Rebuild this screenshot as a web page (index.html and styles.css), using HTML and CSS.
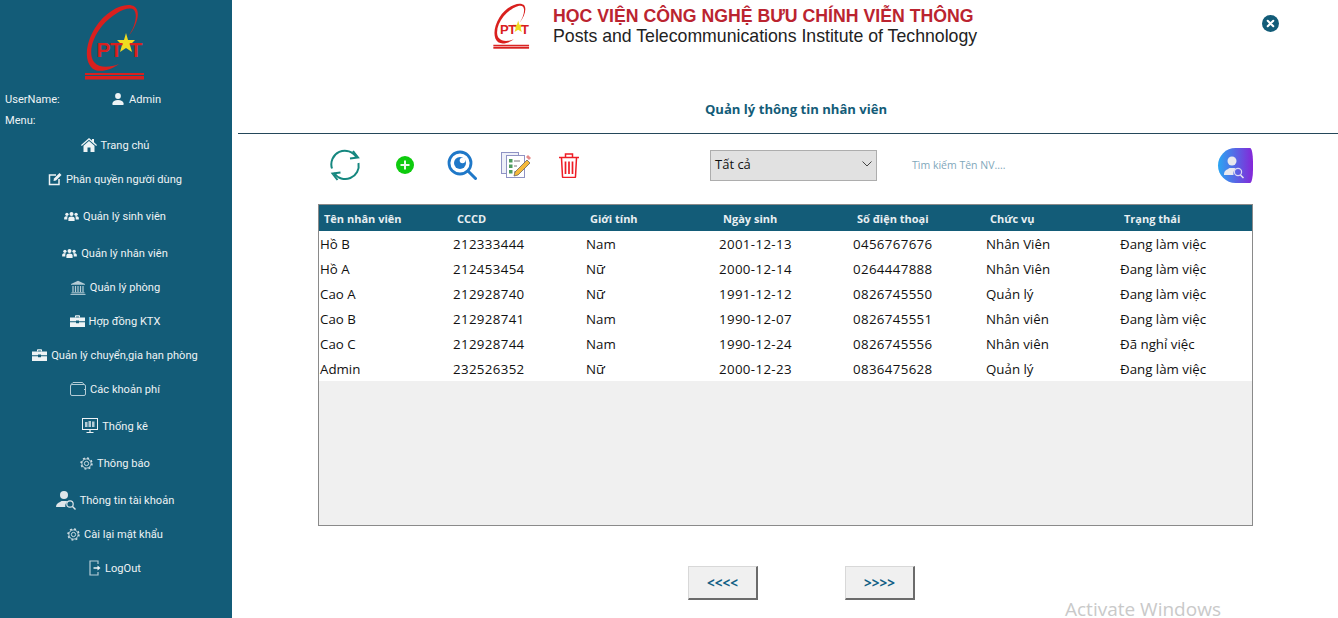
FILE: index.html
```html
<!DOCTYPE html>
<html lang="vi">
<head>
<meta charset="utf-8">
<title>Quản lý thông tin nhân viên</title>
<link rel="stylesheet" href="styles.css">
</head>
<body>
<svg class="defs" width="0" height="0" aria-hidden="true">
  <symbol id="i-users" viewBox="0 0 16 12"><circle cx="8" cy="3.2" r="2.2"/><path d="M4.6 11V8.2C4.6 6.8 5.8 6 8 6s3.4.8 3.4 2.200V11z"/><circle cx="3" cy="3.600" r="1.800"/><path d="M0 9.400V7.600C0 6.400 1 5.800 3 5.800c.4 0 .7 0 1 .1-.6.500-.6 1.300-.6 2.300v1.200z"/><circle cx="13" cy="3.600" r="1.800"/><path d="M16 9.400V7.600C16 6.400 15 5.800 13 5.800c-.4 0-.7 0-1 .1.600.500.600 1.300.600 2.300v1.200z"/></symbol>
  <symbol id="i-case" viewBox="0 0 15 12"><path d="M5 2.500V1.200C5 .6 5.400.2 6 .2h3c.6 0 1 .4 1 1v1.300H8.900V1.400H6.100v1.100z"/><path d="M0 2.500h15v3.700H9v-.8H6v.8H0z"/><path d="M0 7.200h6v1h3v-1h6V12H0z"/></symbol>
  <symbol id="i-gear" viewBox="0 0 14 14"><circle cx="7" cy="7" r="5" fill="none" stroke="currentColor" stroke-width="1"/><circle cx="7" cy="7" r="2.300" fill="none" stroke="currentColor" stroke-width="1"/><circle cx="7" cy="7" r="5.900" fill="none" stroke="currentColor" stroke-width="1.600" stroke-dasharray="2.100 2.530"/></symbol>
  <symbol id="i-ring" viewBox="0 0 60 76">
    <path d="M43 33C52 22 56 8 50 3 42-3 22 5 10 24 0 40-1 58 8 65c7 4 18 1 26-5-10 4-20 4-25-2C3 50 7 34 17 22 28 9 44 1 49 6 53 11 50 23 43 33z" fill="#d9201e"/>
    <polygon points="41,29 43,36 50,36 45,41 47,48 41,44 35,48 37,41 32,36 39,36" fill="#f0dc20"/>
    <rect x="0" y="69" width="59" height="2" fill="#d9201e"/>
    <rect x="0" y="72" width="59" height="3.500" fill="#d9201e"/>
  </symbol>
</svg>

<div class="app">
  <aside class="sidebar">
    <div class="side-logo"><div class="logo-mark"><svg width="60" height="76"><use href="#i-ring"/></svg><span class="logo-pt">PT</span><span class="logo-t">T</span></div></div>
    <div class="user-row">
      <span class="user-label">UserName:</span>
      <span class="user-name">
        <svg width="12" height="12" viewBox="0 0 12 12" fill="currentColor"><circle cx="6" cy="3" r="2.900"/><path d="M.5 12v-1.800C.5 8.300 2.800 7 6 7s5.500 1.300 5.500 3.200V12z"/></svg>
        Admin
      </span>
    </div>
    <div class="menu-label">Menu:</div>
    <nav class="nav">
      <a class="nav-item"><svg width="16" height="14" viewBox="0 0 16 14" fill="currentColor"><path d="M8 0l3 2.600V1h2v3.300L16 7l-.8.9L8 1.700.8 7.900 0 7z"/><path d="M8 3L2.500 7.700V14H6.500V9.500h3V14h4V7.700z"/></svg>Trang chủ</a>
      <a class="nav-item"><svg width="14" height="14" viewBox="0 0 14 14" fill="none" stroke="currentColor"><path d="M8 3H1.500v9.500H11V7" stroke-width="1.500"/><path d="M6 6.500L11.500 1 13.500 3 8 8.500 5.500 9z" fill="currentColor" stroke="none"/></svg>Phân quyền người dùng</a>
      <a class="nav-item tall"><svg width="15" height="11" fill="currentColor"><use href="#i-users"/></svg>Quản lý sinh viên</a>
      <a class="nav-item tall"><svg width="15" height="11" fill="currentColor"><use href="#i-users"/></svg>Quản lý nhân viên</a>
      <a class="nav-item"><svg width="16" height="15" viewBox="0 0 16 15" fill="none" stroke="#b5ccd6"><path d="M8 .8L15 4v.8H1V4z" fill="#b5ccd6" stroke="none"/><path d="M3 6v6M5.500 6v6M8 6v6M10.500 6v6M13 6v6" stroke-width="1.200"/><path d="M1.500 12.800h13M.5 14.400h15"/></svg>Quản lý phòng</a>
      <a class="nav-item"><svg width="15" height="12" fill="currentColor"><use href="#i-case"/></svg>Hợp đồng KTX</a>
      <a class="nav-item"><svg width="15" height="12" fill="currentColor"><use href="#i-case"/></svg>Quản lý chuyển,gia hạn phòng</a>
      <a class="nav-item"><svg width="16" height="14" viewBox="0 0 16 14" fill="none" stroke="#b5ccd6"><rect x=".5" y="2.500" width="15" height="11" rx="1.500"/><path d="M1 2.500L3 .5h9.500l1.500 2"/><path d="M15 7.500h-1"/></svg>Các khoản phí</a>
      <a class="nav-item tall"><svg width="16" height="16" viewBox="0 0 16 16" fill="none" stroke="currentColor"><rect x=".5" y=".5" width="15" height="11"/><rect x="3" y="4" width="2.500" height="5" fill="#b5ccd6" stroke="none"/><rect x="6.500" y="3" width="2.500" height="6" fill="#b5ccd6" stroke="none"/><rect x="10" y="3.500" width="2.500" height="5.500" fill="#b5ccd6" stroke="none"/><path d="M8 12v2M4.500 14.500h7" stroke-width="1.200"/></svg>Thống kê</a>
      <a class="nav-item tall"><svg width="13" height="13" class="gear"><use href="#i-gear"/></svg>Thông báo</a>
      <a class="nav-item tall"><svg class="acct" width="20" height="20" viewBox="0 0 20 20" fill="#dfe6ea"><circle cx="8" cy="5" r="4"/><path d="M0 17c0-3 2-4 4-5l1.500-1h5l1 1c-1.800 1-2.500 2.500-2.200 5z"/><circle cx="14" cy="14" r="3.200" fill="none" stroke="#dfe6ea" stroke-width="1.200"/><path d="M16.500 16.500l3 3" stroke="#dfe6ea" stroke-width="1.400"/></svg>Thông tin tài khoản</a>
      <a class="nav-item"><svg width="13" height="13" class="gear"><use href="#i-gear"/></svg>Cài lại mật khẩu</a>
      <a class="nav-item"><svg width="12" height="16" viewBox="0 0 12 16" fill="none" stroke="#b5ccd6" stroke-width="1.200"><path d="M9 4V1H1v14h8v-3"/><path d="M4.500 8H10" stroke="#eef3f5" stroke-width="1.500"/><path d="M8.500 5.500L11.500 8l-3 2.500z" fill="#eef3f5" stroke="none"/></svg>LogOut</a>
    </nav>
  </aside>

  <main class="main">
    <header class="topbar">
      <div class="brand">
        <div class="logo-mark small"><svg width="37" height="46"><use href="#i-ring"/></svg><span class="logo-pt">PT</span><span class="logo-t">T</span></div>
        <div class="brand-text">
          <div class="brand-vi">HỌC VIỆN CÔNG NGHỆ BƯU CHÍNH VIỄN THÔNG</div>
          <div class="brand-en">Posts and Telecommunications Institute of Technology</div>
        </div>
      </div>
      <button class="close" aria-label="Đóng"><svg width="17" height="17" viewBox="0 0 17 17"><circle cx="8.500" cy="8.500" r="8.500" fill="#125c78"/><path d="M5.700 5.700l5.600 5.600M11.300 5.700l-5.600 5.600" stroke="#fff" stroke-width="2" stroke-linecap="round"/></svg></button>
    </header>

    <h1 class="title">Quản lý thông tin nhân viên</h1>
    <hr class="rule">

    <div class="toolbar">
      <svg class="t-refresh" width="32" height="32" viewBox="0 0 32 32" fill="none" stroke="#15877f" stroke-width="2"><path d="M3 19.500A13.500 13.500 0 0 1 27.500 8.500"/><path d="M29.500 14A13.500 13.500 0 0 1 5 24"/><path d="M24 2l5 6.500-8 1"/><path d="M8.500 31L3.500 24.500l8-1"/></svg>
      <svg class="t-add" width="18" height="18" viewBox="0 0 18 18"><circle cx="9" cy="9" r="9" fill="#0ecb0e"/><path d="M9 4.500v9M4.500 9h9" stroke="#e8fbe8" stroke-width="2"/></svg>
      <svg class="t-search" width="30" height="30" viewBox="0 0 30 30" fill="none"><circle cx="13" cy="13" r="11" stroke="#1f78c8" stroke-width="2.800"/><circle cx="13" cy="13" r="6" fill="#1f78c8"/><circle cx="15.500" cy="10.500" r="2.800" fill="#fff"/><path d="M21 21l7.500 7.500" stroke="#1f78c8" stroke-width="3" stroke-linecap="round"/></svg>
      <svg class="t-notes" width="30" height="26" viewBox="0 0 30 26" fill="none"><rect x=".5" y=".5" width="17" height="21" fill="#eef0f8" stroke="#8f93c4"/><rect x="5.500" y="3.500" width="18" height="22" fill="#fff" stroke="#8f93c4"/><rect x="8" y="7" width="3.500" height="3.500" fill="#4f9c5e"/><rect x="8" y="12.500" width="3.500" height="3.500" fill="#4f9c5e"/><rect x="8" y="18" width="3.500" height="3.500" fill="#4f9c5e"/><path d="M13 9h6M13 14h3M13 20h3" stroke="#777"/><path d="M14 20l12-12 3 3-12 12-4 1z" fill="#f5b93a" stroke="#555" stroke-width=".7"/><path d="M25 5l2-2 3 3-2 2z" fill="#e58a8a"/></svg>
      <svg class="t-trash" width="22" height="25" viewBox="0 0 22 25" fill="none" stroke="#ee1c25" stroke-width="1.500"><path d="M1 4.500h20"/><path d="M7.500 4V1h7v3"/><path d="M3.500 5l1 18.500c0 .5.500 1 1 1h11c.5 0 1-.5 1-1l1-18.500"/><path d="M7.500 8.500V21M11 8.500V21M14.500 8.500V21" stroke-width="1.700"/></svg>

      <div class="select"><span>Tất cả</span><svg width="10" height="6" viewBox="0 0 10 6" fill="none" stroke="#444"><path d="M.5.5L5 5l4.500-4.500"/></svg></div>
      <span class="search-hint">Tìm kiếm Tên NV....</span>
      <button class="avatar-btn" aria-label="Tìm kiếm"><svg width="20" height="24" viewBox="0 0 20 24" fill="#e8e8ee"><circle cx="8" cy="6" r="4.500"/><path d="M0 20c0-4 2-5 4-6l1.500-1h5l1.500 1c-2 1-3 3-2.500 6z"/><circle cx="14" cy="17" r="3.600" fill="none" stroke="#dcd8f4" stroke-width="1.200"/><path d="M16.500 20l3 3" stroke="#e8e8ee" stroke-width="1.500"/></svg></button>
    </div>

    <div class="grid-box">
      <table class="grid">
        <thead>
          <tr><th>Tên nhân viên</th><th>CCCD</th><th>Giới tính</th><th class="wide">Ngày sinh</th><th>Số điện thoại</th><th class="wide">Chức vụ</th><th>Trạng thái</th></tr>
        </thead>
        <tbody>
          <tr><td>Hồ B</td><td class="num">212333444</td><td>Nam</td><td class="num">2001-12-13</td><td class="num">0456767676</td><td>Nhân Viên</td><td>Đang làm việc</td></tr>
          <tr><td>Hồ A</td><td class="num">212453454</td><td>Nữ</td><td class="num">2000-12-14</td><td class="num">0264447888</td><td>Nhân Viên</td><td>Đang làm việc</td></tr>
          <tr><td>Cao A</td><td class="num">212928740</td><td>Nữ</td><td class="num">1991-12-12</td><td class="num">0826745550</td><td>Quản lý</td><td>Đang làm việc</td></tr>
          <tr><td>Cao B</td><td class="num">212928741</td><td>Nam</td><td class="num">1990-12-07</td><td class="num">0826745551</td><td>Nhân viên</td><td>Đang làm việc</td></tr>
          <tr><td>Cao C</td><td class="num">212928744</td><td>Nam</td><td class="num">1990-12-24</td><td class="num">0826745556</td><td>Nhân viên</td><td>Đã nghỉ việc</td></tr>
          <tr><td>Admin</td><td class="num">232526352</td><td>Nữ</td><td class="num">2000-12-23</td><td class="num">0836475628</td><td>Quản lý</td><td>Đang làm việc</td></tr>
        </tbody>
      </table>
    </div>

    <div class="pager">
      <button class="page-btn">&lt;&lt;&lt;&lt;</button>
      <button class="page-btn">&gt;&gt;&gt;&gt;</button>
    </div>
  </main>
</div>
<div class="watermark">Activate Windows</div>
</body>
</html>
```

FILE: styles.css
```css
* { box-sizing: border-box; }
html, body { margin: 0; height: 618px; overflow: hidden; background: #fff; }
body { font-family: "Open Sans", "Noto Sans", sans-serif; color: #111; }
.defs { position: absolute; }
.app { display: flex; height: 618px; }

/* sidebar */
.sidebar { width: 232px; flex: none; background: #135c78; color: #eef3f5; font-family: Roboto, "Open Sans", sans-serif; font-size: 11.1px; }
.side-logo { height: 90px; padding-top: 4px; display: flex; justify-content: center; padding-right: 3px; }
.logo-mark { position: relative; width: 60px; height: 76px; font: 700 21px/1 "Liberation Sans", Arial, sans-serif; color: #d9201e; }
.logo-mark svg { display: block; }
.logo-pt { position: absolute; left: 12px; top: 35px; letter-spacing: -.5px; }
.logo-t { position: absolute; left: 45px; top: 35px; }
.logo-mark.small { width: 37px; height: 46px; font-size: 13px; }
.logo-mark.small .logo-pt { left: 7px; top: 20px; letter-spacing: -.5px; }
.logo-mark.small .logo-t { left: 28px; top: 20px; }
.user-row { height: 18px; display: flex; align-items: center; padding-left: 5px; }
.user-label { width: 107px; }
.user-name { display: flex; align-items: center; gap: 5px; }
.menu-label { height: 16px; margin-top: 4px; padding-left: 5px; display: flex; align-items: center; }
.nav { display: flex; flex-direction: column; }
.nav-item { height: 34px; display: flex; align-items: center; justify-content: center; gap: 4px; padding-right: 2px; }
.nav-item.tall { height: 37px; padding-top: 3px; }
.gear { color: #d5e1e6; }

/* main */
.main { flex: 1; min-width: 0; }
.topbar { height: 52px; display: flex; justify-content: space-between; padding: 0 59px 0 261px; }
.brand { display: flex; gap: 23px; padding-top: 3px; }
.brand-text { font-family: "Liberation Sans", Arial, sans-serif; }
.brand-vi { font-size: 17.7px; font-weight: 700; color: #bb2430; line-height: 21px; margin-top: 3px; white-space: nowrap; }
.brand-en { font-size: 17.7px; color: #222; line-height: 21px; margin-top: -1px; white-space: nowrap; }
.close { border: 0; background: none; padding: 15px 0 0; height: 32px; line-height: 0; }
.title { margin: 48px 0 0 0; height: 18px; font-size: 13.1px; line-height: 18px; font-weight: 700; color: #135c78; text-align: center; padding-left: 22px; }
.rule { margin: 15px 0 0 6px; border: 0; height: 1px; background: #24485a; }

.toolbar { height: 70px; display: flex; align-items: center; padding-left: 97px; padding-bottom: 8px; }
.t-add { margin-left: 35px; }
.t-search { margin-left: 33px; }
.t-notes { margin-left: 24px; }
.t-trash { margin-left: 27px; }
.select { margin-left: 130px; width: 167px; height: 31px; background: #e1e1e1; border: 1.5px solid #adadad; display: flex; align-items: center; justify-content: space-between; padding: 0 4px 2px; font-size: 13px; color: #111; }
.search-hint { margin-left: 35px; width: 306px; font-size: 10.5px; color: #7fa8bb; }
.avatar-btn { width: 35px; height: 35px; padding: 4px 0 0 6px; border: 0; background: linear-gradient(90deg, #2aa6f2, #8526d8); border-radius: 18px 3px 3px 18px / 18px 14px 14px 18px; line-height: 0; text-align: left; }

.grid-box { margin: 0 0 0 86px; width: 935px; height: 322px; background: #f0f0f0; border: 1px solid #8a8a8a; }
.grid { width: 100%; table-layout: fixed; border-collapse: collapse; }
.grid th { width: 133px; height: 26px; background: #135c78; color: #e9eff2; font-size: 11px; font-weight: 700; text-align: left; padding: 0 0 0 5px; }
.grid th.wide { width: 134px; }
.grid td { height: 25px; background: #fff; font-size: 13.3px; padding: 0 0 0 1px; color: #111; }
.grid td.num { letter-spacing: .35px; }

.pager { display: flex; gap: 87px; margin: 40px 0 0 456px; }
.page-btn { width: 70px; height: 34px; background: #f0f0f0; border: 1px solid #d8d8d8; border-right: 2px solid #6b6b6b; border-bottom: 2px solid #6b6b6b; font: 700 13.5px "Open Sans", sans-serif; color: #125f85; padding: 0; }

.watermark { position: absolute; left: 1065px; top: 599px; font-size: 19px; line-height: 21px; color: #c9c9c9; font-family: "Open Sans", sans-serif; }
```
